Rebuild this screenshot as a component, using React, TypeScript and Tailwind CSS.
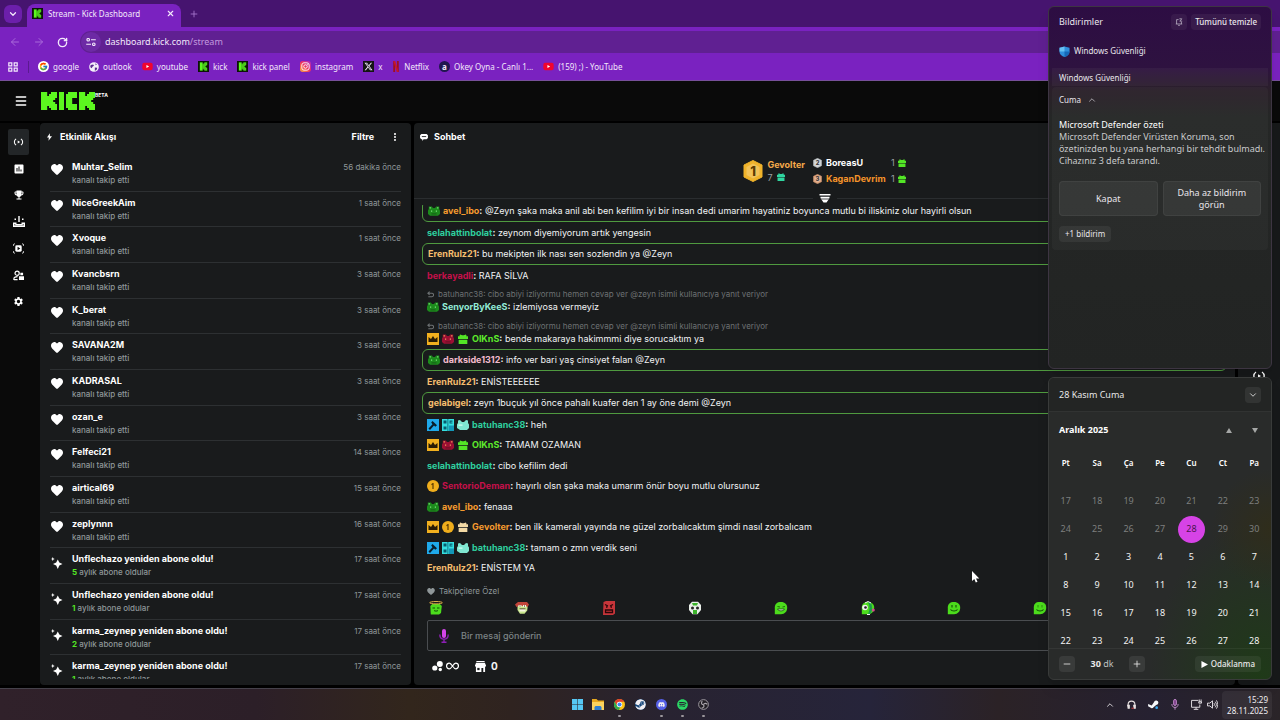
import type { ReactNode } from "react";
import {
  ArrowLeft,
  ArrowRight,
  ChevronDown,
  ChevronUp,
  EllipsisVertical,
  Menu,
  Minus,
  Plus,
  RotateCw,
  X,
} from "lucide-react";
import { FaDiscord, FaSpotify, FaSteam, FaXTwitter, FaYoutube } from "react-icons/fa6";
import { FcGoogle } from "react-icons/fc";
import { MdEmojiEvents, MdInsertChart, MdSettings } from "react-icons/md";

type Activity = { name: string; time: string; months?: number };

const activities: Activity[] = [
  { name: "Muhtar_Selim", time: "56 dakika önce" },
  { name: "NiceGreekAim", time: "1 saat önce" },
  { name: "Xvoque", time: "1 saat önce" },
  { name: "Kvancbsrn", time: "3 saat önce" },
  { name: "K_berat", time: "3 saat önce" },
  { name: "SAVANA2M", time: "3 saat önce" },
  { name: "KADRASAL", time: "3 saat önce" },
  { name: "ozan_e", time: "3 saat önce" },
  { name: "Felfeci21", time: "14 saat önce" },
  { name: "airtical69", time: "15 saat önce" },
  { name: "zeplynnn", time: "16 saat önce" },
  { name: "Unflechazo", time: "17 saat önce", months: 5 },
  { name: "Unflechazo", time: "17 saat önce", months: 1 },
  { name: "karma_zeynep", time: "17 saat önce", months: 2 },
  { name: "karma_zeynep", time: "17 saat önce", months: 1 },
];

type BadgeName =
  | "frog"
  | "redFrog"
  | "mintFrog"
  | "crown"
  | "gift"
  | "creamGift"
  | "hammer"
  | "og"
  | "first";

type Message = {
  user: string;
  color: string;
  text: string;
  badges?: BadgeName[];
  boxed?: boolean;
  reply?: string;
};

const replyText =
  "batuhanc38: cibo abiyi izliyormu hemen cevap ver @zeyn isimli kullanıcıya yanıt veriyor";

const messages: Message[] = [
  {
    user: "avel_ibo",
    color: "text-[#f59a2e]",
    text: "@Zeyn şaka maka anil abi ben kefilim iyi bir insan dedi umarim hayatiniz boyunca mutlu bi iliskiniz olur hayirli olsun",
    badges: ["frog"],
    boxed: true,
  },
  { user: "selahattinbolat", color: "text-[#2fcf9f]", text: "zeynom diyemiyorum artık yengesin" },
  {
    user: "ErenRulz21",
    color: "text-[#f5bd6e]",
    text: "bu mekipten ilk nası sen sozlendin ya @Zeyn",
    boxed: true,
  },
  { user: "berkayadli", color: "text-[#c4104a]", text: "RAFA SİLVA" },
  {
    user: "SenyorByKeeS",
    color: "text-[#93ebd7]",
    text: "izlemiyosa vermeyiz",
    badges: ["frog"],
    reply: replyText,
  },
  {
    user: "OlKnS",
    color: "text-[#5eeb2c]",
    text: "bende makaraya hakimmmi diye sorucaktım ya",
    badges: ["crown", "redFrog", "gift"],
    reply: replyText,
  },
  {
    user: "darkside1312",
    color: "text-[#f3b9cd]",
    text: "info ver bari yaş cinsiyet falan @Zeyn",
    badges: ["frog"],
    boxed: true,
  },
  { user: "ErenRulz21", color: "text-[#f5bd6e]", text: "ENİSTEEEEEE" },
  {
    user: "gelabigel",
    color: "text-[#f5bd6e]",
    text: "zeyn 1buçuk yıl önce pahalı kuafer den 1 ay öne demi @Zeyn",
    boxed: true,
  },
  {
    user: "batuhanc38",
    color: "text-[#2fcf9f]",
    text: "heh",
    badges: ["hammer", "og", "mintFrog"],
  },
  {
    user: "OlKnS",
    color: "text-[#5eeb2c]",
    text: "TAMAM OZAMAN",
    badges: ["crown", "redFrog", "gift"],
  },
  { user: "selahattinbolat", color: "text-[#2fcf9f]", text: "cibo kefilim dedi" },
  {
    user: "SentorioDeman",
    color: "text-[#c4104a]",
    text: "hayırlı olsn şaka maka umarım önür boyu mutlu olursunuz",
    badges: ["first"],
  },
  { user: "avel_ibo", color: "text-[#f59a2e]", text: "fenaaa", badges: ["frog"] },
  {
    user: "Gevolter",
    color: "text-[#f59a2e]",
    text: "ben ilk kameralı yayında ne güzel zorbalıcaktım şimdi nasıl zorbalıcam",
    badges: ["crown", "first", "creamGift"],
  },
  {
    user: "batuhanc38",
    color: "text-[#2fcf9f]",
    text: "tamam o zmn verdik seni",
    badges: ["hammer", "og", "mintFrog"],
  },
  { user: "ErenRulz21", color: "text-[#f5bd6e]", text: "ENİSTEM YA" },
];

const weekdays = ["Pt", "Sa", "Ça", "Pe", "Cu", "Ct", "Pa"];

const weeks = [
  [17, 18, 19, 20, 21, 22, 23],
  [24, 25, 26, 27, 28, 29, 30],
  [1, 2, 3, 4, 5, 6, 7],
  [8, 9, 10, 11, 12, 13, 14],
  [15, 16, 17, 18, 19, 20, 21],
  [22, 23, 24, 25, 26, 27, 28],
];

/* ---------- logos and icons ---------- */

function KickK({ x = 0 }: { x?: number }) {
  return (
    <g transform={`translate(${x} 0)`}>
      <rect width="3.1" height="9" />
      <rect x="3" y="2" width="1.1" height="5" />
      <rect x="4" y="1" width="1.1" height="7" />
      <rect x="5" width="1.1" height="9" />
      <rect x="6" width="1.1" height="4" />
      <rect x="6" y="5" width="1.1" height="4" />
      <rect x="7" width="1" height="3" />
      <rect x="7" y="6" width="1" height="3" />
    </g>
  );
}

function KickLogo() {
  return (
    <svg viewBox="0 0 27 9" className="h-[18px] w-[54px] fill-[#5cf71f]">
      <KickK />
      <rect x="9" width="2.500" height="9" />
      <rect x="12.500" y="1" width="1.100" height="7" />
      <rect x="13.500" width="2.100" height="9" />
      <rect x="15.500" width="2.500" height="3" />
      <rect x="15.500" y="6" width="2.500" height="3" />
      <KickK x={19} />
    </svg>
  );
}

function KickFavicon() {
  return (
    <svg viewBox="0 0 12 12" className="size-[11px]">
      <rect width="12" height="12" fill="#0b1408" />
      <g transform="translate(2 1.5)" fill="#5cf71f">
        <KickK />
      </g>
    </svg>
  );
}

function Globe() {
  return (
    <svg viewBox="0 0 12 12" className="size-[10px]">
      <circle cx="6" cy="6" r="5.8" fill="#f4eefa" />
      <path d="M2 3.5 5 3l1 1.5-1.500 1L3 7.500 1.500 6ZM7 6.500l3 .5-1 2.500-2 1ZM7.500 1.500l2 1.500-1.500 1Z" fill="#5a2a8f" />
    </svg>
  );
}

function Instagram() {
  return (
    <svg viewBox="0 0 12 12" className="size-[11px]">
      <defs>
        <linearGradient id="ig" x1="0" y1="1" x2="1" y2="0">
          <stop offset="0" stopColor="#fbb03b" />
          <stop offset=".5" stopColor="#ef2f5e" />
          <stop offset="1" stopColor="#a52bc8" />
        </linearGradient>
      </defs>
      <rect width="12" height="12" rx="3" fill="url(#ig)" />
      <rect x="2" y="2" width="8" height="8" rx="2.400" fill="none" stroke="#fff" strokeWidth="1" />
      <circle cx="6" cy="6" r="1.900" fill="none" stroke="#fff" strokeWidth="1" />
      <circle cx="8.400" cy="3.600" r=".6" fill="#fff" />
    </svg>
  );
}

function NetflixMark() {
  return (
    <svg viewBox="0 0 8 12" className="h-[11px] w-2">
      <path d="M1 0h2v12H1zM5 0h2v12H5z" fill="#a0101f" />
      <path d="M1 0h2l4 12H5Z" fill="#c81528" />
    </svg>
  );
}

function YoutubeMark() {
  return (
    <span className="relative flex">
      <span className="absolute inset-x-1 inset-y-[3px] bg-white" />
      <FaYoutube className="relative size-[11px] text-[#f0052d]" />
    </span>
  );
}

function LiveIcon({ className }: { className: string }) {
  return (
    <svg viewBox="0 0 12 10" className={className} fill="none" stroke="currentColor" strokeWidth="1.300">
      <path d="M3 1C1.200 2.300.8 3.500.8 5S1.200 7.700 3 9M9 1c1.800 1.300 2.200 2.500 2.200 4S10.800 7.700 9 9" />
      <path d="M5 3.200v3.600L8 5Z" fill="currentColor" stroke="none" />
    </svg>
  );
}

function TrayIcon() {
  return (
    <svg viewBox="0 0 12 11" className="h-[11px] w-3 fill-white">
      <path d="M0 6.500h3.500V8h5V6.500H12V11H0ZM1.500 8v1.600h9V8H9.800v1.200H2.200V8ZM5.300 0h1.400v6H5.300ZM1.500 2.500H3V4H1.500zM9 2.500h1.500V4H9z" fillRule="evenodd" />
    </svg>
  );
}

function CaptureIcon() {
  return (
    <svg viewBox="0 0 12 12" className="size-[11px]">
      <rect x="2.500" y="2.500" width="7" height="7" rx="1.500" fill="#fff" />
      <path d="M5 4.200v3.600L8 6Z" fill="#0a0a0a" />
      <path d="M.6 3V1.500L2 .8M11.400 3V1.500L10 .8M.6 9v1.500l1.400.7M11.400 9v1.500l-1.400.7" stroke="#fff" fill="none" />
    </svg>
  );
}

function CommunityIcon() {
  return (
    <svg viewBox="0 0 12 12" className="size-[11px]">
      <circle cx="4.500" cy="3.500" r="2.300" fill="none" stroke="#fff" strokeWidth="1.300" />
      <path d="M1 11V9.500C1 8 2.500 7.200 5 7.200M1 10.500h4" fill="none" stroke="#fff" strokeWidth="1.300" />
      <path d="M8 3h3v2.800H8zM6.500 6.800H12V11H6.500z" fill="#fff" />
    </svg>
  );
}

function HeartIcon({ className }: { className: string }) {
  return (
    <svg viewBox="0 0 12 11" className={className} fill="currentColor">
      <path d="M3.200 0h.9L6 1.500 7.900 0h.9C10.700.3 12 1.600 12 3.500c0 1.700-.8 2.700-1.900 3.800L6.600 10.800H5.400L1.900 7.300C.8 6.200 0 5.200 0 3.500 0 1.600 1.300.3 3.200 0Z" />
    </svg>
  );
}

function SparkIcon() {
  return (
    <svg viewBox="0 0 12 12" className="mt-px size-3 fill-white">
      <path d="M6.800 2.600 8.300 5.500 11.500 7 8.300 8.500 6.800 12 5.200 8.500 2 7 5.200 5.500ZM1.800 0l.6 1.400 1.400.6-1.400.6L1.800 4l-.7-1.400L-.2 2l1.300-.6Z" />
    </svg>
  );
}

function BoltIcon() {
  return (
    <svg viewBox="0 0 6 9" className="h-2 w-[5px] fill-white">
      <path d="M3.500 0 0 5h2.200L1.800 9 6 3.600H3.400Z" />
    </svg>
  );
}

function BubbleIcon() {
  return (
    <svg viewBox="0 0 9 8" className="h-[7px] w-2">
      <path d="M1.500 0h6L9 1.500v3L7.500 6H4L2.500 8V6H1.500L0 4.500v-3Z" fill="#fff" />
      <path d="M2 2.500h5v1H2z" fill="#191b1c" />
    </svg>
  );
}

function GiftIcon({ color, className }: { color: string; className: string }) {
  return (
    <svg viewBox="0 0 12 12" className={className} fill={color}>
      <path d="M2.500 .5 5 1.500h2L9.500.5l.8 1.500-.6.700H12V6H0V2.700h2.300l-.6-.7ZM.8 6.800h10.400V12H.8Z" />
    </svg>
  );
}

function HexMedal({ rank, className, fill, ink }: { rank: string; className: string; fill: string; ink: string }) {
  return (
    <svg viewBox="0 0 20 22" className={className}>
      <path d="M10 .5 19 5v12l-9 4.500L1 17V5Z" fill={fill} stroke={fill} strokeLinejoin="round" />
      <path d="M10 3.500 16.500 7v8L10 18.500 3.500 15V7Z" fill="#fff" opacity=".22" />
      <text x="10" y="15.500" textAnchor="middle" fontSize="13" fontWeight="800" fill={ink}>
        {rank}
      </text>
    </svg>
  );
}

function Frog({ fill, eye }: { fill: string; eye: string }) {
  return (
    <svg viewBox="0 0 12 12" className="size-3">
      <path d="M.8 1.500h3L5 3h2l1.200-1.500h3V4l.8 1.500V9L10 10.800H2L0 9V5.500L.8 4Z" fill={fill} />
      <path d="M1.600 2.300h1.300v1.300H1.600zM9.100 2.300h1.300v1.300H9.100zM3 5.500h1.200v1.200H3zM7.800 5.500H9v1.200H7.800z" fill={eye} />
      <path d="M3.500 8.500h5v.8h-5z" fill="#0c1a0c" opacity=".5" />
    </svg>
  );
}

function Badge({ name }: { name: BadgeName }) {
  switch (name) {
    case "frog":
      return <Frog fill="#1c8a1c" eye="#7be07b" />;
    case "redFrog":
      return <Frog fill="#9c0f33" eye="#f0a05a" />;
    case "mintFrog":
      return (
        <svg viewBox="0 0 12 12" className="size-3">
          <path d="M1 1.500 3 1l2 2h2l2-2 2 .5V4l1 1.500V9L10 11H3L0 9V5.500L1 4Z" fill="#7fe6d0" />
          <path d="M1.500 5.500h4v1.200h-4z" fill="#d9fff6" />
        </svg>
      );
    case "gift":
      return <GiftIcon color="#53e626" className="size-3 px-px" />;
    case "creamGift":
      return <GiftIcon color="#f3d9a4" className="size-3 px-px" />;
    case "crown":
      return (
        <svg viewBox="0 0 12 12" className="size-3">
          <rect width="12" height="12" fill="#f2b01e" />
          <path d="M1.500 4 4 6l2-3 2 3 2.500-2v5h-9Z" fill="#2a1c05" />
        </svg>
      );
    case "hammer":
      return (
        <svg viewBox="0 0 12 12" className="size-3">
          <rect width="12" height="12" fill="#1fa9ea" />
          <path d="M5.500 2 10 6.200 8.300 7.800 7 6.600 3 11 1.500 9.600 5.500 5.200 4.200 3.600Z" fill="#0a1d29" />
        </svg>
      );
    case "og":
      return (
        <svg viewBox="0 0 12 12" className="size-3">
          <rect width="12" height="12" fill="#35dfe0" />
          <path d="M1.500 1.500h3v3h-3zM7.500 1.500h3v1.200H8.500v.8h2v1h-3zM1.500 7.500h3v3h-3zM5.500 0h.8v12h-.8z" fill="#075c6e" />
          <path d="M7 6.500h5V12H7z" fill="#1398b8" />
        </svg>
      );
    case "first":
      return (
        <svg viewBox="0 0 12 12" className="size-3">
          <circle cx="6" cy="6" r="6" fill="#f0ae1c" />
          <path d="M6.600 3v6H5.400V4.800l-1 .5V4l1.300-1Z" fill="#5b3b03" />
        </svg>
      );
  }
}

type Mood = "halo" | "mask" | "angry" | "skull" | "grin" | "fish" | "smile" | "hands";

function Emote({ mood }: { mood: Mood }) {
  const body =
    mood === "angry" ? "#c7353a" : mood === "mask" ? "#c8e68c" : mood === "skull" ? "#e9efe9" : "#4cdc1c";
  return (
    <svg viewBox="0 0 14 14" className="size-3.5">
      {mood === "angry" && <path d="M1.500 1 4 0h9v12.500L11 14H1Z" fill={body} />}
      {mood === "mask" && <path d="M2.500 2.500H13l-.8 7L9.500 12.800H5L2.500 9Z" fill={body} />}
      {mood === "skull" && <path d="M4 .8h6L13 4v5l-3.500 4.200h-5L1 9V4Z" fill={body} />}
      {mood === "halo" && <path d="M1.800 13.500 1.300 5l2-2h7.500l2 2-.8 7-2 1.500Z" fill={body} />}
      {(mood === "grin" || mood === "smile" || mood === "hands" || mood === "fish") && (
        <path d="M.8 13.200V6.500C.8 3 3 1 7 1s6.200 2.500 6.200 5.800c0 3.700-2.400 6.400-6.200 6.400Z" fill={body} />
      )}
      {mood === "halo" && (
        <>
          <ellipse cx="7" cy="1.700" rx="6.300" ry="1.200" fill="none" stroke="#e0b04a" />
          <path d="M3.500 7h2.500M8 7h2.500M5 9.500c1 .8 3 .8 4 0" stroke="#124d08" fill="none" />
        </>
      )}
      {mood === "mask" && (
        <>
          <path d="M0 3.500 3 1h9l2 2.500-1.500 2.500-1.500-1H3.500l-2 1Z" fill="#c2453a" />
          <path d="M3.500 4H6.500V6H3.500zM8 4h3V6H8zM4.500 8h6v2.500h-6z" fill="#f6f4df" />
          <path d="M4.500 4.500h1v1h-1zM9 4.500h1v1H9zM4.500 7.500h6v.8h-6z" fill="#38220f" />
        </>
      )}
      {mood === "angry" && (
        <path d="m3 3.500 3 1.500M11 3.500 8 5M4 6h1.500M8.500 6H10M3.500 9h7v2.500h-7Z" stroke="#2c0608" fill="none" strokeWidth="1.300" />
      )}
      {mood === "skull" && (
        <>
          <path d="M4 2h6l-1 2.500H5ZM5 9h4v4H5Z" fill="#3bb32a" />
          <circle cx="4.500" cy="7" r="1.500" fill="#222" />
          <circle cx="9.500" cy="7" r="1.500" fill="#222" />
        </>
      )}
      {mood === "grin" && (
        <path d="M3.500 5.500 6 6M11 5.500 8.500 6M3.500 8h7c-1 2.500-6 2.500-7 0Z" fill="#dff7d6" stroke="#124d08" strokeWidth=".8" />
      )}
      {mood === "fish" && (
        <>
          <path d="M7 1c3 0 4 2 4 6s-1 6-4 6c2-4 2-8 0-12Z" fill="#1c9a4b" />
          <circle cx="4" cy="6.500" r="2.800" fill="#f2f2f2" />
          <circle cx="4.500" cy="6.500" r="1.300" fill="#222" />
          <circle cx="12.300" cy="9" r="1.500" fill="#d8458c" />
          <path d="M4 2 7 .5 10 2M6 13.500h3" stroke="#f2f2f2" fill="none" />
        </>
      )}
      {(mood === "smile" || mood === "hands") && (
        <path d="M5 4v2.500M9 4v2.500M3.500 8.500c1.500 2 5.500 2 7 0" stroke="#124d08" fill="none" strokeWidth="1.100" />
      )}
      {mood === "hands" && <path d="M1 4 3 1.500h8L13 4v3H1Z" fill="#4cdc1c" opacity=".5" />}
    </svg>
  );
}

/* ---------- browser chrome ---------- */

const segoe = "font-['Noto_Sans',sans-serif]";

function Bookmark({ icon, children }: { icon: ReactNode; children: ReactNode }) {
  return (
    <a href="#" className="flex items-center gap-1 whitespace-nowrap">
      {icon}
      {children}
    </a>
  );
}

function BrowserChrome() {
  return (
    <header className={`${segoe} text-[8px] leading-3 text-[#f3e9fb]`}>
      <div className="flex h-[27px] items-end bg-[#46146f] pl-1">
        <button aria-label="Sekmelerde ara" className="mb-1 flex h-[18px] w-[18px] items-center justify-center rounded-md bg-[#6c1fab]">
          <ChevronDown className="size-2.5" strokeWidth={3} />
        </button>
        <div className="ml-[5px] flex h-[23px] w-[154px] items-center rounded-t-lg bg-[#7a22c0] pr-1.5 pb-1 pl-[5px]">
          <KickFavicon />
          <span className="ml-[5px] flex-1">Stream - Kick Dashboard</span>
          <button aria-label="Sekmeyi kapat">
            <X className="size-[9px]" strokeWidth={3} />
          </button>
        </div>
        <button aria-label="Yeni sekme" className="mb-2 ml-2 text-[#a97bd0]">
          <Plus className="size-2.5" strokeWidth={2} />
        </button>
      </div>
      <div className="bg-[#7a22c0]">
        <div className="flex h-[30px] items-center pl-[9px]">
          <button aria-label="Geri" className="text-[#a868da]">
            <ArrowLeft className="size-3" strokeWidth={2} />
          </button>
          <button aria-label="İleri" className="ml-3 text-[#a868da]">
            <ArrowRight className="size-3" strokeWidth={2} />
          </button>
          <button aria-label="Yenile" className="ml-3">
            <RotateCw className="size-[11px]" strokeWidth={3} />
          </button>
          <div className="ml-3 flex h-[22px] flex-1 items-center rounded-l-full bg-[#602092] pl-px">
            <span className="flex size-5 items-center justify-center rounded-full bg-[#6d2aa5]">
              <svg viewBox="0 0 12 10" className="h-2 w-2.5" fill="none" stroke="#f3e9fb" strokeWidth="1.400">
                <circle cx="2.500" cy="2.200" r="1.600" />
                <path d="M6 2.200h6M0 7.800h6" />
                <circle cx="9.500" cy="7.800" r="1.600" />
              </svg>
            </span>
            <span className="ml-1 text-[9px]">
              dashboard.kick.com<span className="text-[#c39bdf]">/stream</span>
            </span>
          </div>
        </div>
        <nav className="flex h-6 items-center gap-[10px] border-b border-[#77509a] pb-1 pl-2">
          <svg viewBox="0 0 10 10" className="size-2.5" fill="none" stroke="#f3e9fb" strokeWidth="1.200">
            <path d="M.8.8h3v3h-3zM6.200.8h3v3h-3zM.8 6.200h3v3h-3zM6.200 6.200h3v3h-3z" />
          </svg>
          <span className="-mr-px h-3 w-px bg-[#5b1a90]" />
          <Bookmark
            icon={
              <span className="rounded-full bg-white p-px">
                <FcGoogle className="size-[9px]" />
              </span>
            }
          >
            google
          </Bookmark>
          <Bookmark icon={<Globe />}>outlook</Bookmark>
          <Bookmark icon={<YoutubeMark />}>youtube</Bookmark>
          <Bookmark icon={<KickFavicon />}>kick</Bookmark>
          <Bookmark icon={<KickFavicon />}>kick panel</Bookmark>
          <Bookmark icon={<Instagram />}>instagram</Bookmark>
          <Bookmark
            icon={
              <span className="bg-[#141414] p-px">
                <FaXTwitter className="size-[9px]" />
              </span>
            }
          >
            x
          </Bookmark>
          <Bookmark icon={<NetflixMark />}>Netflix</Bookmark>
          <Bookmark
            icon={
              <span className="flex size-[11px] items-center justify-center rounded-full bg-[#20164f] font-bold">
                a
              </span>
            }
          >
            Okey Oyna - Canlı 1...
          </Bookmark>
          <Bookmark icon={<YoutubeMark />}>(159) ;) - YouTube</Bookmark>
        </nav>
      </div>
    </header>
  );
}

/* ---------- dashboard ---------- */

function SideNav() {
  const items = [
    { label: "Yayın", icon: <LiveIcon className="h-2 w-[11px]" /> },
    { label: "Analiz", icon: <MdInsertChart className="size-3" /> },
    { label: "Başarılar", icon: <MdEmojiEvents className="size-3" /> },
    { label: "İçerik", icon: <TrayIcon /> },
    { label: "Klipler", icon: <CaptureIcon /> },
    { label: "Topluluk", icon: <CommunityIcon /> },
    { label: "Ayarlar", icon: <MdSettings className="size-[11px]" /> },
  ];
  return (
    <nav className="w-10 shrink-0 bg-[#0a0a0a] pt-1.5 pl-2">
      <div className="flex h-[186px] flex-col justify-between">
        {items.map((item, i) => (
          <button
            key={item.label}
            aria-label={item.label}
            className={`flex h-[26px] w-[21px] items-center justify-center rounded-xs text-white ${i === 0 ? "bg-[#232628]" : ""}`}
          >
            {item.icon}
          </button>
        ))}
      </div>
    </nav>
  );
}

function ActivityPanel() {
  return (
    <section className="flex w-[371px] shrink-0 flex-col rounded-sm bg-[#191b1c] pb-1.5">
      <div className="flex h-7 items-center pr-[11px] pl-[7px] text-[9px] font-bold text-white">
        <BoltIcon />
        <h2 className="ml-2 flex-1">Etkinlik Akışı</h2>
        <button>Filtre</button>
        <button aria-label="Seçenekler" className="ml-4">
          <EllipsisVertical className="size-2.5" strokeWidth={3} />
        </button>
      </div>
      <div className="mt-[5px] min-h-0 flex-1 overflow-hidden pr-2.5 pl-2.5">
        <ul className="grid h-[535px] auto-rows-fr">
          {activities.map((a, i) => (
            <li key={i} className="flex border-b border-[#2d3032] pt-1 pl-px">
              <span className="mt-1 w-[21px] text-white">
                {a.months ? <SparkIcon /> : <HeartIcon className="h-[11px] w-3" />}
              </span>
              <div className="flex-1 text-[9px] leading-[14px] font-bold text-white">
                <p>
                  {a.name}
                  {a.months ? " yeniden abone oldu!" : ""}
                </p>
                <p className="text-[8px] leading-[13px] font-medium text-[#8f9799]">
                  {a.months ? (
                    <>
                      <span className="font-bold text-[#53e626]">{a.months}</span> aylık abone oldular
                    </>
                  ) : (
                    "kanalı takip etti"
                  )}
                </p>
              </div>
              <time className="text-[8px] leading-[14px] text-[#8f9799]">{a.time}</time>
            </li>
          ))}
        </ul>
      </div>
    </section>
  );
}

function MessageRow({ message }: { message: Message }) {
  return (
    <li className={message.boxed ? "-mx-[5px] rounded-md border border-[#4f9a3f] px-[5px] py-[3px]" : "py-[3px]"}>
      {message.reply && (
        <p className="flex items-center gap-1 text-[8px] leading-[11px] text-[#6d7173]">
          <svg viewBox="0 0 8 8" className="size-[7px]" fill="none" stroke="currentColor" strokeWidth="1.200">
            <path d="M3 .8 1 2.600l2 1.800M1 2.600h4.500a1.900 1.900 0 0 1 0 4H1.500" />
          </svg>
          {message.reply}
        </p>
      )}
      <div className="flex h-3.5 items-center gap-[3px] leading-[14px] whitespace-nowrap">
        {message.badges?.map((b) => <Badge key={b} name={b} />)}
        <p>
          <span className={`font-bold ${message.color}`}>{message.user}</span>
          <span className="font-bold">:</span> {message.text}
        </p>
      </div>
    </li>
  );
}

function Runner({ rank, name, color, fill }: { rank: string; name: string; color: string; fill: string }) {
  return (
    <li className="flex h-4 items-center">
      <HexMedal rank={rank} className="mr-1 h-2.5 w-[9px]" fill={fill} ink="#3a3a3a" />
      <span className={`w-[65px] font-bold ${color}`}>{name}</span>
      <span className="mr-[3px] text-[#9aa1a4]">1</span>
      <GiftIcon color="#53e626" className="size-2" />
    </li>
  );
}

const moods: Mood[] = ["halo", "mask", "angry", "skull", "grin", "fish", "smile", "hands", "smile", "grin"];

function ChatPanel() {
  return (
    <section className="flex min-w-0 flex-1 flex-col rounded-sm bg-[#191b1c] text-[9px] text-[#f1f3f4]">
      <div className="flex h-7 items-center gap-1.5 pl-1.5 font-bold text-white">
        <BubbleIcon />
        <h2>Sohbet</h2>
      </div>
      <div className="relative flex h-12 items-center justify-center gap-2 border-b border-[#2a2d2f] pb-2">
        <div className="flex items-center gap-1">
          <HexMedal rank="1" className="h-[22px] w-5" fill="#efb32b" ink="#5b3b03" />
          <div className="leading-[13px]">
            <p className="font-bold text-[#f5a94a]">Gevolter</p>
            <p className="flex items-center gap-1 text-[#9aa1a4]">
              7 <GiftIcon color="#2fd6a0" className="size-2" />
            </p>
          </div>
        </div>
        <ul>
          <Runner rank="2" name="BoreasU" color="text-white" fill="#c9ced1" />
          <Runner rank="3" name="KaganDevrim" color="text-[#f5942a]" fill="#dba07a" />
        </ul>
        <button
          aria-label="Sıralamayı genişlet"
          className="absolute -bottom-1.5 left-1/2 flex w-6 -translate-x-1/2 justify-center bg-[#191b1c]"
        >
          <svg viewBox="0 0 12 10" className="h-2.5 w-3 fill-white">
            <path d="M.5 0h11v1.600H.5zM1.500 2.800h9v1.400l-3 4.300h-3l-3-4.300Z" />
            <path d="M0 4.600h12v.8H0z" fill="#191b1c" />
          </svg>
        </button>
      </div>
      <div className="mt-1.5 flex min-h-0 flex-1 flex-col justify-end overflow-hidden px-[13px]">
        <ol className="flex h-[378px] shrink-0 flex-col justify-between">
          {messages.map((m, i) => (
            <MessageRow key={i} message={m} />
          ))}
        </ol>
      </div>
      <div className="px-[13px] pt-[7px]">
        <p className="flex items-center gap-1 text-[8px] leading-3 text-[#8f9799]">
          <HeartIcon className="h-[7px] w-2" />
          Takipçilere Özel
        </p>
        <div className="mt-1 flex justify-between px-0.5">
          {moods.map((mood, i) => (
            <button key={i} aria-label="İfade gönder">
              <Emote mood={mood} />
            </button>
          ))}
        </div>
        <label className="mt-[5px] flex h-[31px] items-center rounded-xs border border-[#4a4d50] pl-[11px]">
          <svg viewBox="0 0 10 14" className="h-3.5 w-2.5">
            <rect x="3" width="4" height="9" rx="2" fill="#d445ea" />
            <path d="M.8 5.500C.8 8.500 2.500 10.200 5 10.200s4.200-1.700 4.200-4.700M5 10v3M2.500 13.200h5" stroke="#8d1fb5" strokeWidth="1.400" fill="none" />
          </svg>
          <input
            aria-label="Mesaj"
            placeholder="Bir mesaj gönderin"
            className="ml-3 flex-1 bg-transparent font-medium placeholder:text-[#7d8486]"
          />
        </label>
        <div className="flex h-[34px] items-center pb-1 pl-[5px] text-[10px] font-bold">
          <svg viewBox="0 0 11 12" className="h-3 w-[11px] fill-white">
            <circle cx="2.800" cy="8" r="2.600" />
            <circle cx="7.800" cy="4" r="3" />
            <circle cx="8.300" cy="9.500" r="1.700" />
          </svg>
          <svg viewBox="0 0 14 8" className="ml-[3px] h-2 w-[13px]" fill="none" stroke="#fff" strokeWidth="1.300">
            <path d="M7 4C5.600 2 4.800 1 3.600 1a3 3 0 0 0 0 6C4.800 7 5.600 6 7 4s2.200-3 3.400-3a3 3 0 0 1 0 6C9.200 7 8.400 6 7 4Z" />
          </svg>
          <button className="ml-4 flex items-center gap-[5px]">
            <svg viewBox="0 0 12 12" className="size-[11px]">
              <path d="M1.500 0h9v1.200h-9zM1.200 1.800h9.600L12 5v1h-1v6H9V7.500H7V12H1V6H0V5Z" fill="#fff" />
              <path d="M2.500 7.500H5V10H2.500z" fill="#191b1c" />
            </svg>
            0
          </button>
        </div>
      </div>
    </section>
  );
}

/* ---------- Windows shell ---------- */

function NotificationCenter() {
  return (
    <section className="flex min-h-0 flex-1 flex-col rounded-md border border-[#3d3542] bg-[linear-gradient(to_bottom,#2d0d43_0,#2e1240_60px,#2a2029_84px,#252726_110px,#222423_100%)] text-[9px] leading-3 text-[#e9e6ec] shadow-lg">
      <div className="flex h-[30px] items-center px-2.5">
        <h2 className="flex-1 text-[9px]">Bildirimler</h2>
        <button aria-label="Rahatsız etme" className="flex size-4 items-center justify-center rounded-sm bg-white/5">
          <svg viewBox="0 0 10 10" className="size-2" fill="none" stroke="#bcb2c5" strokeWidth="1">
            <path d="M4.500 2H2v5.500M8 5v2.500M1 7.500h8M4 9.300h2M5.500 1h3L6 4h3" />
          </svg>
        </button>
        <button className="ml-1 h-4 rounded-sm bg-white/5 px-1 text-[8px] font-medium">Tümünü temizle</button>
      </div>
      <div className="flex h-[31px] items-center gap-1 px-2.5 pb-[3px] text-[8px]">
        <svg viewBox="0 0 12 12" className="size-[11px]">
          <path d="M6 .5 11.500 2v4c0 3-2.500 5-5.500 6C3 11 .5 9 .5 6V2Z" fill="#2f8fdc" />
          <path d="M6 .5V6H.5V2Z" fill="#7fd4fb" opacity=".7" />
          <path d="M6 6h5.500c0 3-2.500 5-5.500 6Z" fill="#1668b8" />
        </svg>
        Windows Güvenliği
      </div>
      <div className="mx-[3px] h-[18px] bg-white/4 px-[7px] text-[8px] leading-5">Windows Güvenliği</div>
      <article className="mx-[3px] mt-px rounded-sm bg-white/3 pb-2 pl-[7px]">
        <p className="flex h-[26px] items-center gap-1.5 text-[8px]">
          Cuma <ChevronUp className="size-2.5" strokeWidth={1.5} />
        </p>
        <h3 className="mt-1.5 text-white">Microsoft Defender özeti</h3>
        <p className="text-[#c9cacb]">
          Microsoft Defender Virüsten Koruma, son özetinizden bu yana herhangi bir tehdit bulmadı. Cihazınız 3 defa
          tarandı.
        </p>
        <div className="mt-[14px] mr-[7px] grid h-[35px] grid-cols-2 gap-[5px]">
          <button className="rounded-sm border border-white/5 bg-white/6">Kapat</button>
          <button className="rounded-sm border border-white/5 bg-white/6 px-3">Daha az bildirim görün</button>
        </div>
        <button className="mt-2.5 h-4 rounded-sm bg-white/6 px-1.5 text-[8px]">+1 bildirim</button>
      </article>
    </section>
  );
}

function CalendarFlyout() {
  return (
    <section className="overflow-hidden rounded-md border border-[#393b3a] bg-[#292b2a] bg-[radial-gradient(circle_at_100%_50%,#2f2d1b_0,transparent_60px),radial-gradient(ellipse_at_95%_100%,#1f3a18_0,transparent_110px)] text-[9px] leading-3 text-[#e8e8e8] shadow-lg">
      <div className="flex h-[34px] items-center border-b border-[#313332] bg-[#232524] px-2.5">
        <h2 className="flex-1">28 Kasım Cuma</h2>
        <button aria-label="Takvimi daralt" className="flex size-4 items-center justify-center rounded-sm bg-white/7">
          <ChevronDown className="size-2.5" />
        </button>
      </div>
      <div className="flex h-9 items-center px-2.5">
        <h3 className="flex-1 font-bold text-white">Aralık 2025</h3>
        <button aria-label="Önceki ay" className="mr-5">
          <svg viewBox="0 0 6 5" className="h-[5px] w-1.5 fill-[#a5a7a6]">
            <path d="M3 0 6 5H0Z" />
          </svg>
        </button>
        <button aria-label="Sonraki ay" className="mr-[3px]">
          <svg viewBox="0 0 6 5" className="h-[5px] w-1.5 fill-[#a5a7a6]">
            <path d="M0 0h6L3 5Z" />
          </svg>
        </button>
      </div>
      <table className="mx-px w-[calc(100%-2px)] table-fixed text-center">
        <thead>
          <tr className="h-[39px] align-top text-[8px]">
            {weekdays.map((d) => (
              <th key={d} className="pt-[9px] font-semibold text-white">
                {d}
              </th>
            ))}
          </tr>
        </thead>
        <tbody>
          {weeks.map((week, row) => (
            <tr key={row} className="h-7">
              {week.map((day) => (
                <td key={day} className={row < 2 ? "text-[#7d7f7e]" : "text-[#f3f3f3]"}>
                  {row === 1 && day === 28 ? (
                    <span className="mx-auto flex size-[27px] items-center justify-center rounded-full bg-[#d643e6] text-[#4a1450]">
                      28
                    </span>
                  ) : (
                    day
                  )}
                </td>
              ))}
            </tr>
          ))}
        </tbody>
      </table>
      <div className="-mt-[7px] flex h-[31px] items-center border-t border-white/5 px-2.5">
        <button aria-label="Azalt" className="flex size-4 items-center justify-center rounded-sm bg-white/8">
          <Minus className="size-2.5" />
        </button>
        <p className="w-[54px] text-center">
          <b>30</b> <span className="text-[#bfc1c0]">dk</span>
        </p>
        <button aria-label="Artır" className="flex size-4 items-center justify-center rounded-sm bg-white/8">
          <Plus className="size-2.5" />
        </button>
        <button className="ml-auto flex h-4 items-center gap-[3px] rounded-sm bg-white/6 px-1.5 text-[8px] font-medium">
          <svg viewBox="0 0 8 8" className="size-[7px] fill-white">
            <path d="M.5 0 8 4 .5 8Z" />
          </svg>
          Odaklanma
        </button>
      </div>
    </section>
  );
}

function TaskApp({ label, running, children }: { label: string; running?: boolean; children: ReactNode }) {
  return (
    <button aria-label={label} className="relative flex size-3 items-center justify-center">
      {children}
      {running && <span className="absolute top-full mt-1 h-[2px] w-[3px] rounded-full bg-[#9b979c]" />}
    </button>
  );
}

function Taskbar() {
  return (
    <footer
      className={`${segoe} grid h-8 shrink-0 grid-cols-[1fr_auto_1fr] items-center border-t border-[#45414a] bg-[linear-gradient(to_right,#30212a_0,#2c1f28_20%,#32261c_32%,#2f2320_40%,#282331_52%,#26243a_68%,#2b2226_78%,#262131_90%,#2a2428_100%)] text-[8px] leading-[11px] text-[#f2eff3]`}
    >
      <span />
      <div className="flex gap-[9px]">
        <TaskApp label="Başlat">
          <svg viewBox="0 0 12 12" className="size-[11px] fill-[#56c8f5]">
            <path d="M0 0h5.700v5.700H0zM6.300 0H12v5.700H6.300zM0 6.300h5.700V12H0zM6.300 6.300H12V12H6.300z" />
          </svg>
        </TaskApp>
        <TaskApp label="Dosya Gezgini">
          <svg viewBox="0 0 12 11" className="h-[11px] w-3">
            <path d="M0 0h4.500L6 1.500h6V11H0Z" fill="#e8a91f" />
            <path d="M0 3h12v8H0Z" fill="#fbd35e" />
            <path d="M2.500 11V8l1-1h5l1 1v3Z" fill="#2f7fd0" />
          </svg>
        </TaskApp>
        <TaskApp label="Chrome" running>
          <svg viewBox="0 0 12 12" className="size-[11px]">
            <circle cx="6" cy="6" r="6" fill="#fbc116" />
            <path d="M.8 3A6 6 0 0 1 11.200 3H6a3 3 0 0 0-2.600 4.500Z" fill="#e33b2e" />
            <path d="M.8 3 3.400 7.500A3 3 0 0 0 7 8.800L5.400 12A6 6 0 0 1 .8 3Z" fill="#2da94f" />
            <circle cx="6" cy="6" r="2.900" fill="#fff" />
            <circle cx="6" cy="6" r="2.200" fill="#4086f4" />
          </svg>
        </TaskApp>
        <TaskApp label="Steam">
          <FaSteam className="size-[11px] rounded-full bg-[#15477c]" />
        </TaskApp>
        <TaskApp label="Discord" running>
          <span className="rounded-full bg-[#5560e6] p-[2px]">
            <FaDiscord className="size-[7px]" />
          </span>
        </TaskApp>
        <TaskApp label="Spotify" running>
          <FaSpotify className="size-[11px] text-[#2bd865]" />
        </TaskApp>
        <TaskApp label="OBS Studio" running>
          <svg viewBox="0 0 12 12" className="size-[11px]" fill="none" stroke="#a9a5ab">
            <circle cx="6" cy="6" r="5.300" fill="#221f25" />
            <path d="M5.800 6.200C3.500 6 3.300 3.500 4.800 2.500M6 6c1-2 3.500-1.500 4 0M6 6.300C7.300 8 6 10 4 9.600" strokeWidth="1.300" />
          </svg>
        </TaskApp>
      </div>
      <div className="flex items-center justify-self-end pr-2">
        <ChevronUp className="size-2.5" />
        <svg viewBox="0 0 12 12" className="ml-3 size-[9px]" fill="none" stroke="#e8e2e2" strokeWidth="1.500">
          <path d="M1.500 8V6a4.500 4.500 0 0 1 9 0v2" />
          <path d="M1 7h2v4H1.500ZM9 7h2v4H9.500Z" fill="#e8e2e2" />
          <path d="M9 11H6" stroke="#c23b3b" />
        </svg>
        <svg viewBox="0 0 12 10" className="ml-3 h-[9px] w-[11px]">
          <path d="M0 4.500 4 6l2.500-3.500A2.500 2.500 0 1 1 9 5.500L6 8a2 2 0 0 1-3.500.3L0 7Z" fill="#f5f7fa" />
          <circle cx="9.500" cy="8.500" r="1.500" fill="#35a7f0" />
        </svg>
        <svg viewBox="0 0 8 12" className="ml-3 h-[11px] w-2" fill="none" stroke="#c78fd0">
          <rect x="2.500" y=".5" width="3" height="6.500" rx="1.500" fill="#7d3f88" />
          <path d="M.6 5.500C.6 8 2 9.200 4 9.200s3.400-1.200 3.400-3.700M4 9.200v2.500" />
        </svg>
        <svg viewBox="0 0 12 12" className="ml-3 size-[11px]" fill="none" stroke="#ebe7ec">
          <path d="M8 1.500H.6v7.500h9V6M3 11.300h5M5.500 9v2M9 .5v2.500M11 .5v2.500M8.500 3h3v1.500h-3z" />
        </svg>
        <svg viewBox="0 0 12 12" className="ml-[5px] size-[11px]" fill="none" stroke="#ebe7ec">
          <path d="M.5 4.500H3L6 2v8L3 7.500H.5ZM7.500 4.500c.8 1 .8 2 0 3M9 3c1.600 2 1.600 4 0 6M10.300 1.500c2 3 2 6 0 9" />
        </svg>
        <div className="ml-1 rounded-sm bg-white/6 py-[3px] pr-1 pl-[5px] text-right">
          <p>15:29</p>
          <p>28.11.2025</p>
        </div>
      </div>
    </footer>
  );
}

export default function App() {
  return (
    <div className="relative flex h-screen flex-col overflow-hidden bg-black font-['Inter',sans-serif]">
      <BrowserChrome />
      <div className="flex h-10 shrink-0 items-center bg-[#0a0a0a] pl-[14px] text-white">
        <button aria-label="Menü">
          <Menu className="size-3.5" strokeWidth={2.5} />
        </button>
        <a href="#" aria-label="Kick" className="ml-[13px]">
          <KickLogo />
        </a>
        <span className="mb-3 text-[5px] leading-[6px] font-bold">BETA</span>
      </div>
      <main className="mt-[2px] mb-[3px] flex min-h-0 flex-1">
        <SideNav />
        <ActivityPanel />
        <span className="w-[3px]" />
        <ChatPanel />
        <aside className="ml-[3px] flex w-[42px] flex-col items-center rounded-l-sm bg-[#17191a] pt-[248px] text-white">
          <LiveIcon className="h-2.5 w-3" />
        </aside>
      </main>
      <Taskbar />
      <div className={`${segoe} absolute top-1.5 right-2 bottom-10 flex w-56 flex-col gap-2`}>
        <NotificationCenter />
        <CalendarFlyout />
      </div>
      <svg viewBox="0 0 8 12" className="absolute top-[571px] left-[972px] h-3 w-2">
        <path d="M0 0v10l2.300-2 1.500 3.500 1.700-.7L4 7.500h3.300Z" fill="#fff" />
      </svg>
    </div>
  );
}
